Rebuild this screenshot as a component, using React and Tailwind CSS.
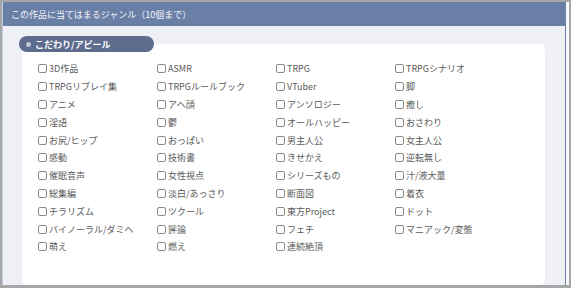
import React from "react";

const items = [
  "3D作品", "ASMR", "TRPG", "TRPGシナリオ",
  "TRPGリプレイ集", "TRPGルールブック", "VTuber", "脚",
  "アニメ", "アヘ顔", "アンソロジー", "癒し",
  "淫語", "鬱", "オールハッピー", "おさわり",
  "お尻/ヒップ", "おっぱい", "男主人公", "女主人公",
  "感動", "技術書", "きせかえ", "逆転無し",
  "催眠音声", "女性視点", "シリーズもの", "汁/液大量",
  "総集編", "淡白/あっさり", "断面図", "着衣",
  "チラリズム", "ツクール", "東方Project", "ドット",
  "バイノーラル/ダミヘ", "評論", "フェチ", "マニアック/変態",
  "萌え", "燃え", "連続絶頂",
];

export default function App() {
  return (
    <div
      className="w-[571px] h-[288px] bg-[#a7a7a7] pt-[2px] pl-[2px] pr-[2px] pb-[3px] flex overflow-hidden"
      style={{ fontFamily: '"Noto Sans CJK JP", "Noto Sans", sans-serif' }}
    >
      <div className="w-[1px] bg-[#c3cce6]" />
      <div className="flex-1 flex flex-col bg-[#eff0f6] border-r border-[#6b7fa8]">
        <div className="h-[24px] bg-[#6a7fa6] flex items-center pl-[8px] text-[9px] text-[#f4f5f9] leading-none">
          この作品に当てはまるジャンル（10個まで）
        </div>
        <div className="flex-1 flex flex-col pt-[10px] pl-[16px] pr-[20px]">
          <div className="relative z-10 w-[135px] h-[16px] rounded-full bg-[#5e6c8e] flex items-center pl-[7px] gap-[4px]">
            <span className="w-[5px] h-[5px] rounded-full bg-[#c4c8d4]" />
            <span className="text-[9px] font-bold text-white leading-none">こだわり/アピール</span>
          </div>
          <div className="flex-1 -mt-[8px] ml-[3px] bg-white rounded-[5px] pt-[16px] pl-[16px]">
            <div className="grid grid-cols-[repeat(4,119px)] auto-rows-[17.8px]">
              {items.map((t) => (
                <div key={t} className="flex items-center gap-[2px]">
                  <span className="w-[9px] h-[9px] border border-[#8a8a8a] rounded-[2px] bg-white shrink-0" />
                  <span className="text-[9px] text-[#5a5a5a] leading-none whitespace-nowrap">{t}</span>
                </div>
              ))}
            </div>
          </div>
        </div>
      </div>
      <div className="w-[3px] bg-[#f7f8fb]" />
    </div>
  );
}
